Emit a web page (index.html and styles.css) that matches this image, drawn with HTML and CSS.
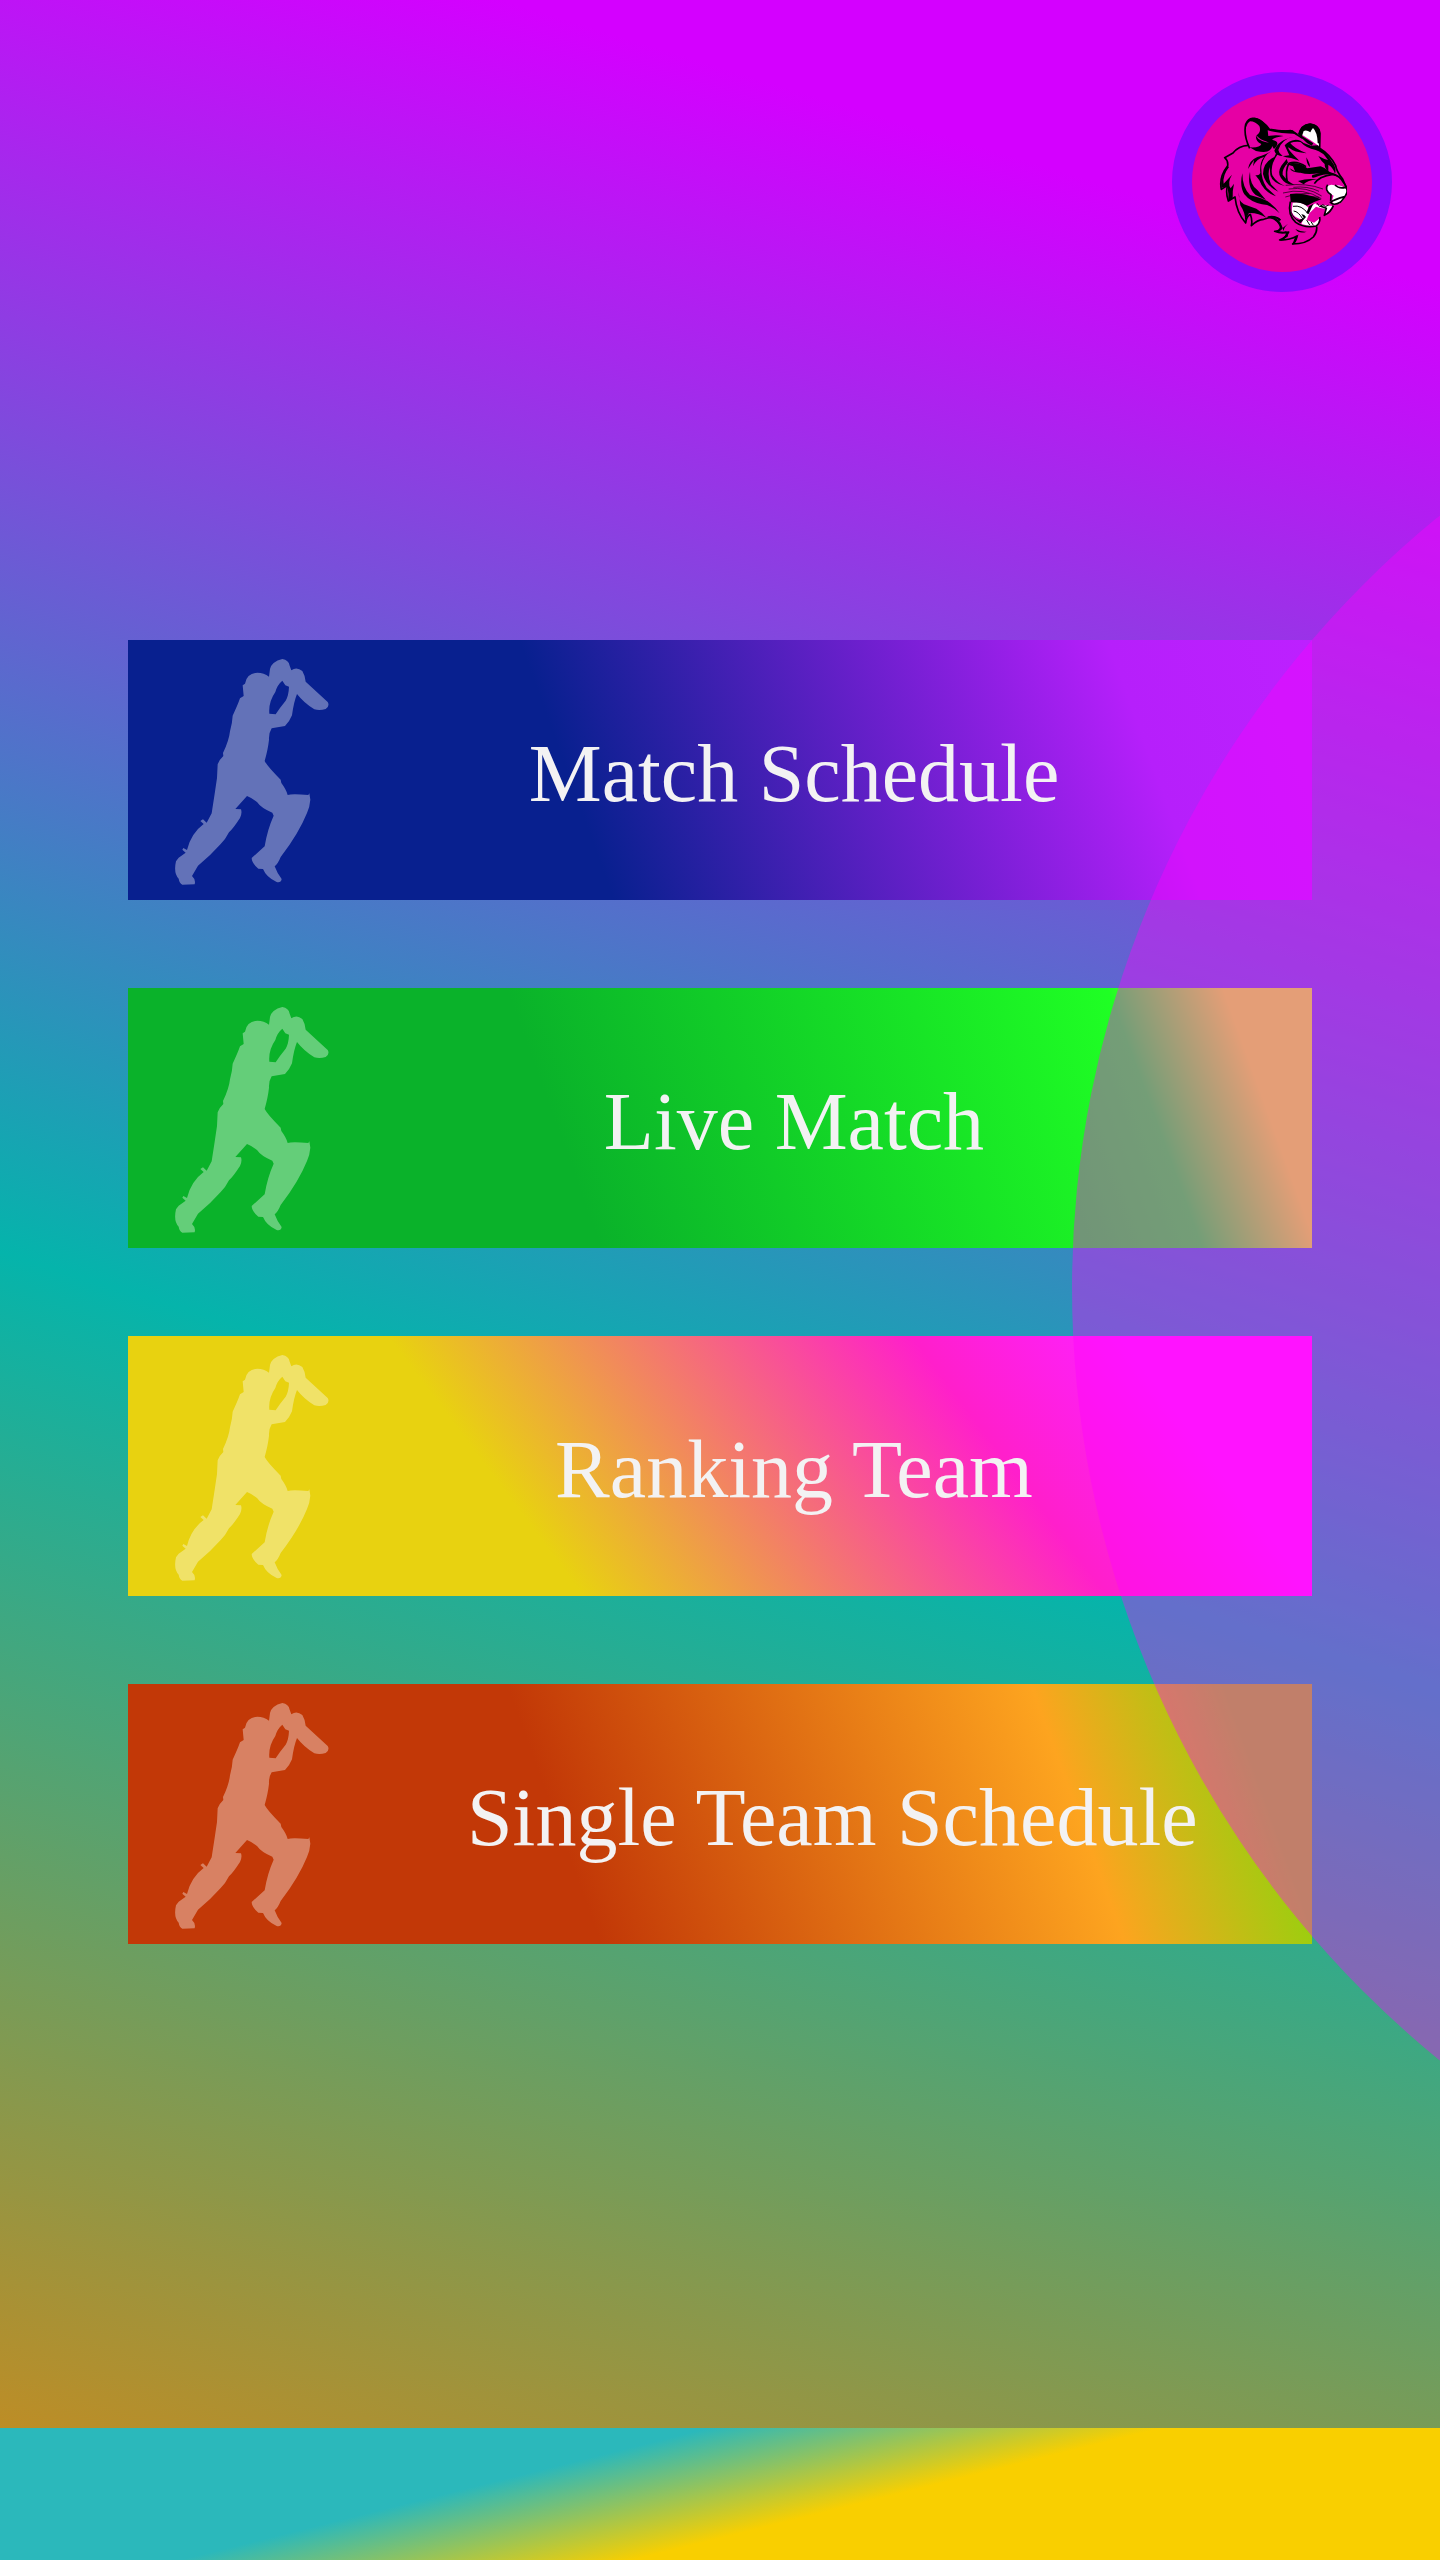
FILE: index.html
```
<!DOCTYPE html>
<html lang="en">
<head>
<meta charset="utf-8">
<meta name="viewport" content="width=device-width, initial-scale=1">
<title>Cricket Schedule</title>
<link rel="stylesheet" href="styles.css">
</head>
<body>
<svg class="symbols" aria-hidden="true">
  <symbol id="batter" viewBox="165 88 462 678">
    <path fill-rule="evenodd" d="M368 167L375 162Q380 131 412 129Q432 129 447 141L450 118Q455 96 487 88Q506 91 509 108L514 122Q530 110 547 124Q555 137 557 156L623 217Q630 229 617 238Q599 244 583 239Q552 220 531 193Q521 218 516 257Q508 277 495 289L455 296Q446 310 447 330Q444 358 434 394Q442 410 482 450L484 460Q499 480 503 496Q515 491 565 496L568 491L571 510Q569 534 561 550Q536 612 482 682Q474 702 464 710Q471 730 485 748Q483 760 470 757Q439 743 429 718L415 717Q395 700 395 685L434 650Q442 600 461 558L457 549Q423 535 411 517Q400 507 381 499L346 538L363 539Q367 550 360 565Q340 596 327 608Q316 630 302 643Q273 676 234 708L216 739Q228 750 224 764L187 765Q178 760 176 747Q160 730 168 695L176 684L197 669L187 660L190 655L201 661Q213 611 251 583L241 574L249 569L260 579L275 551Q284 494 291 445L293 404Q298 390 310 379L309 370Q327 333 330 305Q337 280 338 258Q354 224 360 206L371 199ZM487 153Q472 165 466 187Q445 217 448 252L467 254Q478 236 497 213Q506 198 507 171L496 167Z"/>
  </symbol>
</svg>

<main class="screen">
  <header class="topbar">
    <a class="logo" href="#" aria-label="Home">
      <svg class="tiger" viewBox="171 171 390 390" aria-hidden="true">
        <g fill="#fff">
          <path d="M422 222Q424 196 450 193Q478 196 480 222V260Q452 240 422 222Z"/>
          <path d="M499 382Q508 370 524 376Q548 374 561 390Q560 410 547 422Q541 435 520 431Q514 420 521 407Q499 398 499 382Z"/>
          <path d="M398 428Q426 422 446 444L466 430L470 434L510 437L520 438L493 467L498 447Q478 444 468 440L448 460L440 480L462 488L478 476L472 497H446L424 492L430 478Q403 476 395 455Z"/>
        </g>
        <g class="tiger-line">
          <path d="M269 265Q250 225 257 193Q266 170 286 176Q308 181 328 208Q368 215 392 212Q407 221 428 235"/>
          <path d="M265 256Q236 257 219 279L194 293Q205 302 203 317Q176 352 184 388L203 376Q196 397 205 423L225 411Q230 459 257 489Q259 470 271 463Q278 482 274 497Q292 479 311 478Q348 465 361 480"/>
          <path d="M361 481Q347 467 325 471Q354 475 364 504Q360 513 344 514Q364 522 386 516Q380 531 359 540Q388 541 411 528Q409 544 398 552Q438 552 460 531Q472 516 470 500"/>
          <path d="M418 226Q421 194 451 192Q479 196 480 220L479 265Q510 284 527 317Q529 334 548 357L561 388"/>
          <path d="M463 371Q478 348 519 343Q540 347 549 366Q563 381 561 397Q557 410 542 426Q521 439 511 427Q525 418 554 410"/>
          <path d="M503 374Q492 389 513 404L512 423M525 375Q537 387 557 382M382 367Q375 330 387 310Q409 300 438 320"/>
          <path d="M391 425Q382 464 407 487Q433 505 469 498Q482 487 479 471"/>
          <path d="M480 438L499 445L493 466Q512 458 520 437"/>
        </g>
        <g class="tiger-hair">
          <path d="M377 376Q440 368 489 387M386 387Q440 379 485 408M369 399Q430 382 484 416M376 411Q415 399 448 401M398 420Q427 405 477 412M400 382Q443 377 477 394"/>
        </g>
        <g>
          <path d="M258 194Q265 170 290 174Q313 183 326 207Q358 213 397 210L414 222Q350 220 323 211L325 228Q348 223 371 228Q344 232 336 239Q365 245 342 267Q334 252 321 245Q300 240 289 226Q305 217 298 198Q286 184 270 184Q260 190 260 202Z"/>
          <path d="M288 227Q298 246 336 249Q340 260 329 271Q319 280 288 273L269 262Q300 264 304 252Q286 244 288 227Z"/>
          <path d="M414 222Q420 196 445 191Q470 189 480 211L480 252L473 249Q472 216 459 204Q454 209 451 217Q440 209 431 213L426 228L460 250L455 257Q438 249 429 238Z"/>
          <path d="M401 230Q363 238 355 270Q359 291 393 294L418 302Q382 269 385 262Q403 278 440 280Q399 263 391 249Q404 244 421 246L433 252Q423 239 407 239Q384 243 374 256L388 286Q349 294 343 272Q353 240 401 230Z"/>
          <path d="M421 245L453 257L473 256L503 286L523 316Q529 334 525 341Q519 322 505 314L505 335Q493 325 494 312Q484 304 475 288Q491 297 504 300Q489 276 467 270Q438 264 421 245Z"/>
          <path d="M395 309Q421 307 442 325L482 319Q497 324 508 335L526 342L534 350Q506 336 476 348Q450 360 457 345L480 339Q444 346 421 338Q397 339 389 325L405 334L399 319L379 313Z"/>
          <path d="M384 308Q366 326 368 344Q383 365 403 374Q378 377 363 354Q351 338 364 317L380 297Z"/>
          <path d="M353 283Q329 317 337 346Q351 369 376 379Q337 369 331 345L329 321Q321 347 333 373L355 395Q317 377 309 342Q309 306 343 291L351 274Z"/>
          <path d="M334 274Q311 286 304 318Q302 357 320 383L348 409Q312 397 298 361L286 345Q297 348 301 339Q298 309 312 291Q289 297 279 319L282 300L264 327Q268 301 292 291Q319 284 334 274Z"/>
          <path d="M247 340Q247 382 270 405L303 415Q335 425 359 460Q334 434 306 433Q271 426 253 403Q238 378 247 340Z"/>
          <path d="M270 335Q269 374 293 391L318 420L287 405Q260 381 270 335Z"/>
          <path d="M236 397Q235 425 252 433L289 446Q307 457 319 473Q295 458 267 459L255 482Q257 460 241 436Z"/>
          <path d="M184 384Q180 351 203 318L207 321Q187 347 191 371L216 344Q201 369 212 385L222 371Q217 391 218 416L205 425Q207 401 202 378Z"/>
          <path d="M324 470Q358 468 368 503Q361 516 351 514L372 515Q384 510 384 529L372 538Q402 539 416 523L404 551L397 554L404 534L359 543Q376 531 378 520L344 515Q364 508 358 496Q350 478 324 470Z"/>
          <path d="M390 402Q420 397 457 409L484 418Q460 426 441 437Q422 426 392 427ZM447 439L460 431L446 462L439 459Z"/>
          <path d="M392 434Q389 466 408 479L421 490L438 471Q434 463 424 462L431 474L418 480Q400 476 394 454Z"/>
          <path d="M367 505L384 491Q371 503 371 513Z M406 507Q425 517 440 515Q417 523 406 507ZM414 363Q446 354 472 359Q442 359 431 373ZM439 292Q452 315 449 321Q440 314 439 292Z"/>
          <circle cx="411" cy="326" r="5"/>
        </g>
        <g class="tooth-line"><path d="M399 439Q425 434 444 461M401 453Q415 454 429 478M440 480L449 495M453 485L460 496M472 430L479 440L489 434L496 440L506 435"/></g>
      </svg>
    </a>
  </header>

  <nav class="menu" aria-label="Matches">
    <a class="card card-schedule" href="#"><svg class="batter" aria-hidden="true"><use href="#batter"/></svg><span class="label">Match Schedule</span></a>
    <a class="card card-live" href="#"><svg class="batter" aria-hidden="true"><use href="#batter"/></svg><span class="label">Live Match</span></a>
    <a class="card card-ranking" href="#"><svg class="batter" aria-hidden="true"><use href="#batter"/></svg><span class="label">Ranking Team</span></a>
    <a class="card card-single" href="#"><svg class="batter" aria-hidden="true"><use href="#batter"/></svg><span class="label">Single Team Schedule</span></a>
  </nav>
  <div class="halo"></div>
</main>
<footer class="banner"></footer>
</body>
</html>
```
FILE: styles.css
```
* {
  box-sizing: border-box;
}

body {
  margin: 0;
  min-height: 100vh;
  display: flex;
  flex-direction: column;
  font-family: "Gentium Book Basic", "Gentium Basic", Gentium, "Liberation Serif", serif;
}

.symbols {
  display: none;
}

.screen {
  position: relative;
  flex: 1;
  overflow: hidden;
  background: linear-gradient(17deg, #bd8d26 0%, #05b4ab 41%, #d400ff 90%);
}

.topbar {
  display: flex;
  justify-content: flex-end;
  padding: 72px 48px 0;
}

.logo {
  display: grid;
  place-items: center;
  width: 220px;
  height: 220px;
  border: 20px solid #8a0aff;
  border-radius: 50%;
  background: #e600a4;
}

.tiger {
  width: 130px;
  height: 130px;
}

.tiger-line {
  fill: none;
  stroke: #000;
  stroke-width: 5;
  stroke-linejoin: round;
}

.tiger-hair {
  fill: none;
  stroke: #000;
  stroke-width: 2;
}

.tooth-line {
  fill: none;
  stroke: #000;
  stroke-width: 3;
}

.menu {
  display: flex;
  flex-direction: column;
  gap: 88px;
  padding: 348px 128px 88px;
}

.card {
  display: flex;
  align-items: center;
  gap: 138px;
  height: 260px;
  padding: 4px 0 0 47px;
  color: #f3f2f3;
  text-decoration: none;
}

.batter {
  flex: none;
  width: 154px;
  height: 226px;
  fill: #fff;
  opacity: 0.37;
}

.label {
  min-width: 654px;
  padding-top: 4px;
  font-size: 82px;
  text-align: center;
  white-space: nowrap;
}

.card-schedule {
  background: linear-gradient(70deg, #08208f 38%, #b61ffb 84%, #bd20ff 100%);
}

.card-live {
  background: linear-gradient(70deg, #0ab22a 37%, #1fff24 84%, #d3ff25 93%);
}

.card-ranking {
  background: linear-gradient(53deg, #e8d210 33%, #ff1fcb 71%, #ff20ff 86%);
}

.card-single {
  background: linear-gradient(70deg, #c23807 37%, #fda41f 78%, #9cce0f 93%);
}

/* Translucent disc that runs off the right edge, over the cards */
.halo {
  position: absolute;
  top: 293px;
  left: calc(100% - 368px);
  width: 1990px;
  height: 1990px;
  border-radius: 50%;
  background: rgba(255, 0, 255, 0.38);
  pointer-events: none;
}

.banner {
  height: 132px;
  background: linear-gradient(166deg, #2bb8bb 36%, #f9cf00 59%);
}
```
